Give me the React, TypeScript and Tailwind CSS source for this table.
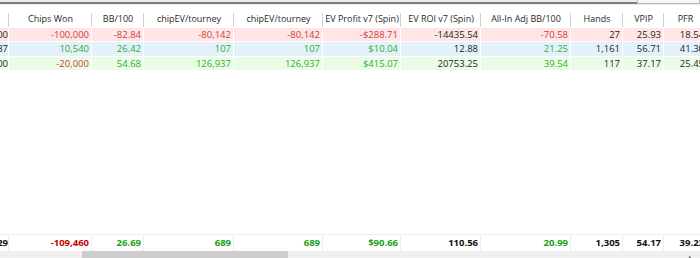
const widths = [9, 83, 52, 90, 89, 78, 80, 90, 52, 41, 43]

const headers = ['', 'Chips Won', 'BB/100', 'chipEV/tourney', 'chipEV/tourney', 'EV Profit v7 (Spin)', 'EV ROI v7 (Spin)', 'All-In Adj BB/100', 'Hands', 'VPIP', 'PFR']

type Cell = [string, 'r' | 'g' | 'k']

const rows: { bg: string; cells: Cell[] }[] = [
  {
    bg: 'bg-[#ffe5e5]',
    cells: [['00', 'k'], ['-100,000', 'r'], ['-82.84', 'r'], ['-80,142', 'r'], ['-80,142', 'r'], ['-$288.71', 'r'], ['-14435.54', 'k'], ['-70.58', 'r'], ['27', 'k'], ['25.93', 'k'], ['18.54', 'k']],
  },
  {
    bg: 'bg-[#e3f1fb]',
    cells: [['87', 'k'], ['10,540', 'g'], ['26.42', 'g'], ['107', 'g'], ['107', 'g'], ['$10.04', 'g'], ['12.88', 'k'], ['21.25', 'g'], ['1,161', 'k'], ['56.71', 'k'], ['41.30', 'k']],
  },
  {
    bg: 'bg-[#eafce6]',
    cells: [['00', 'k'], ['-20,000', 'r'], ['54.68', 'g'], ['126,937', 'g'], ['126,937', 'g'], ['$415.07', 'g'], ['20753.25', 'k'], ['39.54', 'g'], ['117', 'k'], ['37.17', 'k'], ['25.45', 'k']],
  },
]

const totals: Cell[] = [['29', 'k'], ['-109,460', 'r'], ['26.69', 'g'], ['689', 'g'], ['689', 'g'], ['$90.66', 'g'], ['110.56', 'k'], ['20.99', 'g'], ['1,305', 'k'], ['54.17', 'k'], ['39.23', 'k']]

const rowColor = { r: 'text-[#d23c3c]', g: 'text-[#2fae2f]', k: 'text-[#1e1e1e]' }
const totColor = { r: 'text-[#c40000]', g: 'text-[#17a017]', k: 'text-[#111]' }

export default function App() {
  return (
    <div className="w-[700px] h-[258px] overflow-hidden bg-white font-['Open_Sans','Noto_Sans',sans-serif] text-[9.5px] leading-none">
      <div className="h-[268px] flex flex-col">
        {/* frame bottom */}
        <div className="h-[5px] flex bg-[#ececec]">
          <div className="w-[637px] flex flex-col">
            <div className="h-[2px]" />
            <div className="h-[2px] bg-[#7c7c7c]" />
          </div>
          <div className="flex-1 h-[4px] border border-t-0 border-[#b4b4b4] bg-[#f7f7f7]" />
        </div>
        <div className="h-[5px] bg-white" />

        {/* header */}
        <div className="h-[18px] flex whitespace-nowrap overflow-hidden text-[9px]">
          {headers.map((h, i) => (
            <div
              key={i}
              style={{ width: widths[i] }}
              className="shrink-0 flex items-center justify-center relative text-[#2a2a2a] pb-[1px]"
            >
              {h}
              {i < headers.length - 1 && <div className="absolute right-0 top-[3px] bottom-[1px] w-px bg-[#d0d0d0]" />}
            </div>
          ))}
        </div>

        {rows.map((r, ri) => (
          <div key={ri} className={`${ri === 1 ? 'h-[15px]' : 'h-[14px]'} flex ${r.bg} border-b border-white`}>
            {r.cells.map(([v, c], i) => (
              <div
                key={i}
                style={{ width: widths[i] }}
                className={`shrink-0 flex items-center justify-end ${i === 0 ? 'pr-0' : 'pr-[2px]'} border-r border-white whitespace-nowrap ${rowColor[c]}`}
              >
                {v}
              </div>
            ))}
          </div>
        ))}

        <div className="flex-1" />

        {/* totals */}
        <div className="h-[17px] flex border-t border-[#ededed] font-bold">
          {totals.map(([v, c], i) => (
            <div
              key={i}
              style={{ width: widths[i] }}
              className={`shrink-0 flex items-center justify-end ${i === 0 ? 'pr-0' : 'pr-[2px]'} border-r border-[#ededed] whitespace-nowrap ${totColor[c]}`}
            >
              {v}
            </div>
          ))}
        </div>

        {/* horizontal scrollbar */}
        <div className="h-[17px] flex bg-[#f0f0f0]">
          <div className="w-[82px]" />
          <div className="w-[206px] h-full bg-[#cdcdcd]" />
          <div className="flex-1" />
          <div className="w-[17px] flex items-center justify-center mr-[1px]">
            <svg width="6" height="8" viewBox="0 0 6 8">
              <path d="M1 0.5 L4.5 4 L1 7.5" fill="none" stroke="#606060" strokeWidth="1.3" />
            </svg>
          </div>
        </div>
      </div>
    </div>
  )
}
